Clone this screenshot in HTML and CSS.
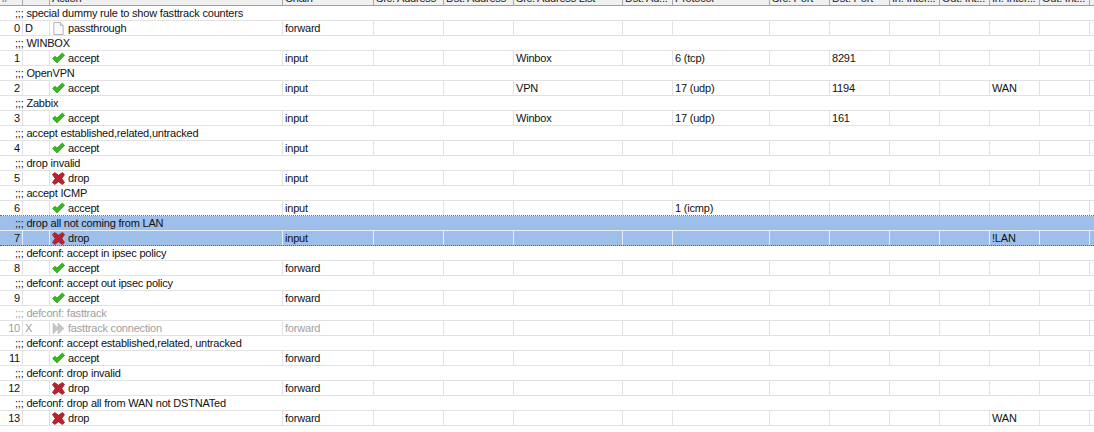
FILE: index.html
```html
<!DOCTYPE html>
<html lang="en">
<head>
<meta charset="utf-8">
<title>Firewall rules</title>
<link rel="stylesheet" href="styles.css">
</head>
<body>
<svg class="defs" width="0" height="0" aria-hidden="true">
  <symbol id="i-check" viewBox="0 0 13 13"><path d="M.6 6.6 2.9 4.2 5 6 10.2 1 12.6 3.2 5 11z" fill="#38b71f" stroke="#2a9a18" stroke-width=".7" stroke-linejoin="round"/></symbol>
  <symbol id="i-x" viewBox="0 0 13 13"><path d="M2.6 .5 6.5 3.2 10.4 .5 12.5 2.6 9.8 6.5 12.5 10.4 10.4 12.5 6.5 9.8 2.6 12.5 .5 10.4 3.2 6.5 .5 2.6z" fill="#b8232f" stroke="#a01c2a" stroke-width=".8" stroke-linejoin="round"/></symbol>
  <symbol id="i-doc" viewBox="0 0 13 14"><path d="M1.5 .5H8.5L11.5 3.5V13.5H1.5z" fill="#fbfbfb" stroke="#aab0b4"/><path d="M8.5 .5V3.5H11.5" fill="#e4e6e8" stroke="#aab0b4"/></symbol>
  <symbol id="i-ff" viewBox="0 0 13 13"><path d="M1 1 6.5 6.5 1 12zM6 1 12 6.5 6 12z" fill="#c6c6c6" stroke="#b8b8b8" stroke-width=".6"/></symbol>
</svg>
<div class="table">
  <div class="row head">
    <div class="c"><span>#</span></div><div class="c"></div><div class="c"><span>Action</span></div><div class="c"><span>Chain</span></div><div class="c"><span>Src. Address</span></div><div class="c"><span>Dst. Address</span></div><div class="c"><span>Src. Address List</span></div><div class="c"><span>Dst. Ad...</span></div><div class="c"><span>Protocol</span></div><div class="c"><span>Src. Port</span></div><div class="c"><span>Dst. Port</span></div><div class="c"><span>In. Inter...</span></div><div class="c"><span>Out. Int...</span></div><div class="c"><span>In. Inter...</span></div><div class="c"><span>Out. Int...</span></div><div class="c"></div>
  </div>

  <div class="note">;;; special dummy rule to show fasttrack counters</div>
  <div class="row"><div class="c num">0</div><div class="c">D</div><div class="c act"><svg class="ico"><use href="#i-doc"/></svg>passthrough</div><div class="c">forward</div><div class="c"></div><div class="c"></div><div class="c"></div><div class="c"></div><div class="c"></div><div class="c"></div><div class="c"></div><div class="c"></div><div class="c"></div><div class="c"></div><div class="c"></div><div class="c"></div></div>

  <div class="note">;;; WINBOX</div>
  <div class="row"><div class="c num">1</div><div class="c"></div><div class="c act"><svg class="ico"><use href="#i-check"/></svg>accept</div><div class="c">input</div><div class="c"></div><div class="c"></div><div class="c">Winbox</div><div class="c"></div><div class="c">6 (tcp)</div><div class="c"></div><div class="c">8291</div><div class="c"></div><div class="c"></div><div class="c"></div><div class="c"></div><div class="c"></div></div>

  <div class="note">;;; OpenVPN</div>
  <div class="row"><div class="c num">2</div><div class="c"></div><div class="c act"><svg class="ico"><use href="#i-check"/></svg>accept</div><div class="c">input</div><div class="c"></div><div class="c"></div><div class="c">VPN</div><div class="c"></div><div class="c">17 (udp)</div><div class="c"></div><div class="c">1194</div><div class="c"></div><div class="c"></div><div class="c">WAN</div><div class="c"></div><div class="c"></div></div>

  <div class="note">;;; Zabbix</div>
  <div class="row"><div class="c num">3</div><div class="c"></div><div class="c act"><svg class="ico"><use href="#i-check"/></svg>accept</div><div class="c">input</div><div class="c"></div><div class="c"></div><div class="c">Winbox</div><div class="c"></div><div class="c">17 (udp)</div><div class="c"></div><div class="c">161</div><div class="c"></div><div class="c"></div><div class="c"></div><div class="c"></div><div class="c"></div></div>

  <div class="note">;;; accept established,related,untracked</div>
  <div class="row"><div class="c num">4</div><div class="c"></div><div class="c act"><svg class="ico"><use href="#i-check"/></svg>accept</div><div class="c">input</div><div class="c"></div><div class="c"></div><div class="c"></div><div class="c"></div><div class="c"></div><div class="c"></div><div class="c"></div><div class="c"></div><div class="c"></div><div class="c"></div><div class="c"></div><div class="c"></div></div>

  <div class="note">;;; drop invalid</div>
  <div class="row"><div class="c num">5</div><div class="c"></div><div class="c act"><svg class="ico"><use href="#i-x"/></svg>drop</div><div class="c">input</div><div class="c"></div><div class="c"></div><div class="c"></div><div class="c"></div><div class="c"></div><div class="c"></div><div class="c"></div><div class="c"></div><div class="c"></div><div class="c"></div><div class="c"></div><div class="c"></div></div>

  <div class="note">;;; accept ICMP</div>
  <div class="row pre-sel"><div class="c num">6</div><div class="c"></div><div class="c act"><svg class="ico"><use href="#i-check"/></svg>accept</div><div class="c">input</div><div class="c"></div><div class="c"></div><div class="c"></div><div class="c"></div><div class="c">1 (icmp)</div><div class="c"></div><div class="c"></div><div class="c"></div><div class="c"></div><div class="c"></div><div class="c"></div><div class="c"></div></div>

  <div class="note sel-note">;;; drop all not coming from LAN</div>
  <div class="row sel"><div class="c num">7</div><div class="c"></div><div class="c act"><svg class="ico"><use href="#i-x"/></svg>drop</div><div class="c">input</div><div class="c"></div><div class="c"></div><div class="c"></div><div class="c"></div><div class="c"></div><div class="c"></div><div class="c"></div><div class="c"></div><div class="c"></div><div class="c">!LAN</div><div class="c"></div><div class="c"></div></div>

  <div class="note">;;; defconf: accept in ipsec policy</div>
  <div class="row"><div class="c num">8</div><div class="c"></div><div class="c act"><svg class="ico"><use href="#i-check"/></svg>accept</div><div class="c">forward</div><div class="c"></div><div class="c"></div><div class="c"></div><div class="c"></div><div class="c"></div><div class="c"></div><div class="c"></div><div class="c"></div><div class="c"></div><div class="c"></div><div class="c"></div><div class="c"></div></div>

  <div class="note">;;; defconf: accept out ipsec policy</div>
  <div class="row"><div class="c num">9</div><div class="c"></div><div class="c act"><svg class="ico"><use href="#i-check"/></svg>accept</div><div class="c">forward</div><div class="c"></div><div class="c"></div><div class="c"></div><div class="c"></div><div class="c"></div><div class="c"></div><div class="c"></div><div class="c"></div><div class="c"></div><div class="c"></div><div class="c"></div><div class="c"></div></div>

  <div class="note off">;;; defconf: fasttrack</div>
  <div class="row off"><div class="c num">10</div><div class="c">X</div><div class="c act"><svg class="ico"><use href="#i-ff"/></svg>fasttrack connection</div><div class="c">forward</div><div class="c"></div><div class="c"></div><div class="c"></div><div class="c"></div><div class="c"></div><div class="c"></div><div class="c"></div><div class="c"></div><div class="c"></div><div class="c"></div><div class="c"></div><div class="c"></div></div>

  <div class="note">;;; defconf: accept established,related, untracked</div>
  <div class="row"><div class="c num">11</div><div class="c"></div><div class="c act"><svg class="ico"><use href="#i-check"/></svg>accept</div><div class="c">forward</div><div class="c"></div><div class="c"></div><div class="c"></div><div class="c"></div><div class="c"></div><div class="c"></div><div class="c"></div><div class="c"></div><div class="c"></div><div class="c"></div><div class="c"></div><div class="c"></div></div>

  <div class="note">;;; defconf: drop invalid</div>
  <div class="row"><div class="c num">12</div><div class="c"></div><div class="c act"><svg class="ico"><use href="#i-x"/></svg>drop</div><div class="c">forward</div><div class="c"></div><div class="c"></div><div class="c"></div><div class="c"></div><div class="c"></div><div class="c"></div><div class="c"></div><div class="c"></div><div class="c"></div><div class="c"></div><div class="c"></div><div class="c"></div></div>

  <div class="note">;;; defconf: drop all from WAN not DSTNATed</div>
  <div class="row"><div class="c num">13</div><div class="c"></div><div class="c act"><svg class="ico"><use href="#i-x"/></svg>drop</div><div class="c">forward</div><div class="c"></div><div class="c"></div><div class="c"></div><div class="c"></div><div class="c"></div><div class="c"></div><div class="c"></div><div class="c"></div><div class="c"></div><div class="c">WAN</div><div class="c"></div><div class="c"></div></div>
</div>
</body>
</html>
```

FILE: styles.css
```css
* { box-sizing: border-box; }

html, body {
  margin: 0;
  height: 100%;
  overflow: hidden;
  background: #fff;
}

.defs { display: block; height: 0; }

.table {
  font-family: "Liberation Sans", Arial, sans-serif;
  font-size: 11px;
  letter-spacing: -0.2px;
  line-height: 14px;
  color: #111;
}

.row {
  display: grid;
  grid-template-columns: 23px 27px 233px 91px 70px 70px 109px 50px 97px 60px 60px 50px 50px 50px 50px 1fr;
  height: 15px;
  border-bottom: 1px solid #e2e2e2;
}

.c {
  padding-left: 2px;
  border-right: 1px solid #e2e2e2;
  white-space: nowrap;
  overflow: hidden;
}

.c:last-child { border-right: 0; }

.num {
  padding: 0 2px 0 0;
  text-align: right;
}

.act {
  display: flex;
  align-items: center;
  padding-left: 2px;
}

.ico {
  width: 13px;
  height: 13px;
  margin-right: 3px;
  flex: none;
}

.head {
  height: 6px;
  background: #f0f0f0;
  border-bottom: 1px solid #a0a0a0;
  color: #222;
}

.head .c {
  display: flex;
  align-items: flex-end;
  border-right-color: #a8a8a8;
}

.head span { display: block; flex: none; }

.note {
  height: 15px;
  padding-left: 15px;
  border-bottom: 1px solid #e2e2e2;
  white-space: nowrap;
}

.off { color: #a0a0a0; }

.pre-sel { border-bottom: 1px dotted #707070; }

.sel-note {
  background: #9dbfe9;
  border-bottom-color: #e8eff9;
}

.sel {
  background: #9dbfe9;
  border-bottom: 1px dotted #606060;
}

.sel .c { border-right-color: #e8eff9; }
```
